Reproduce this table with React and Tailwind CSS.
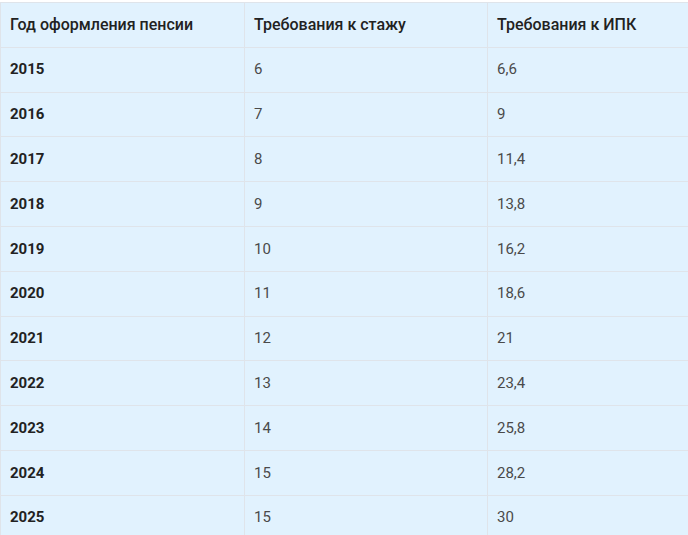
const rows = [
  ['2015', '6', '6,6'],
  ['2016', '7', '9'],
  ['2017', '8', '11,4'],
  ['2018', '9', '13,8'],
  ['2019', '10', '16,2'],
  ['2020', '11', '18,6'],
  ['2021', '12', '21'],
  ['2022', '13', '23,4'],
  ['2023', '14', '25,8'],
  ['2024', '15', '28,2'],
  ['2025', '15', '30'],
]

function Cell({ children, className = '' }) {
  return (
    <div className={`h-[44.8px] flex items-center pl-[9px] border-r border-b border-[#dfe4ea] ${className}`}>
      {children}
    </div>
  )
}

export default function App() {
  return (
    <div className="w-[688px] h-[535px] overflow-hidden bg-white pt-[2px]" style={{ fontFamily: 'Roboto, sans-serif' }}>
      <div className="w-[760px] grid grid-cols-[244px_243px_273px] bg-[#e1f2fe] border-t border-l border-[#dfe4ea]">
        <Cell className="text-[16px] font-medium text-[#222]">Год оформления пенсии</Cell>
        <Cell className="text-[16px] font-medium text-[#222]">Требования к стажу</Cell>
        <Cell className="text-[16px] font-medium text-[#222]">Требования к ИПК</Cell>
        {rows.map((r) => (
          <div key={r[0]} className="contents">
            <Cell className="text-[15px] font-bold text-[#222]">{r[0]}</Cell>
            <Cell className="text-[15px] text-[#4a4a4a]">{r[1]}</Cell>
            <Cell className="text-[15px] text-[#4a4a4a]">{r[2]}</Cell>
          </div>
        ))}
      </div>
    </div>
  )
}
